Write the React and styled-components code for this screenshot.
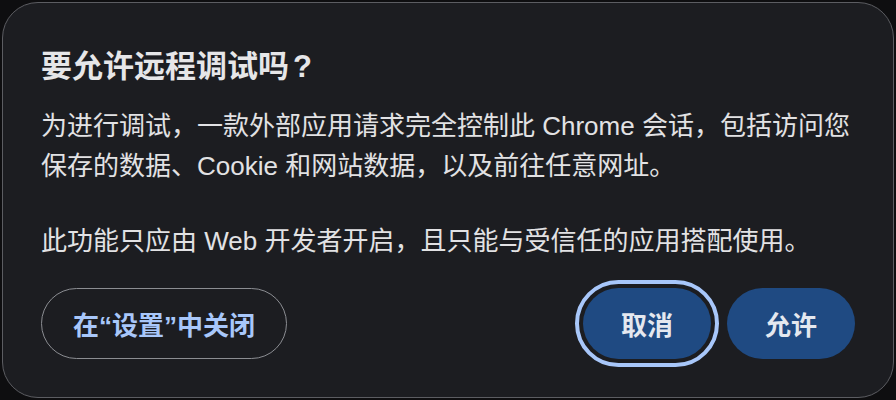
import React from "react";
import styled, { createGlobalStyle } from "styled-components";

const Global = createGlobalStyle`
  html, body { margin: 0; padding: 0; background: #0e0e10; }
  body { width: 896px; height: 400px; overflow: hidden; }
  * { box-sizing: border-box; }
`;

const Page = styled.div`
  width: 896px;
  height: 400px;
  padding: 2px;
  font-family: "Liberation Sans", "Noto Sans CJK SC", sans-serif;
`;

const Dialog = styled.div`
  width: 100%;
  height: 100%;
  background: #1c1d21;
  border: 1.5px solid #5c5d62;
  border-radius: 36px;
  padding: 44px 38px 0 38px;
  display: flex;
  flex-direction: column;
`;

const Title = styled.h1`
  margin: 0;
  font-size: 31px;
  line-height: 40px;
  font-weight: 700;
  color: #e6e6e8;
`;

const Question = styled.span`
  margin-left: 4px;
`;

const Body = styled.div`
  margin-top: 19px;
  display: flex;
  flex-direction: column;
  gap: 35px;
`;

const Para = styled.p`
  margin: 0;
  font-size: 26px;
  line-height: 40px;
  color: #e2e2e4;
`;

const Actions = styled.div`
  margin-top: 27px;
  display: flex;
  align-items: center;
  gap: 16px;
`;

const Spacer = styled.div`
  flex: 1;
`;

const Button = styled.button`
  height: 71px;
  padding: 0 ${(p) => p.$px || 32}px;
  border-radius: 36px;
  font-family: inherit;
  font-size: 26px;
  font-weight: 700;
  cursor: pointer;
  border: ${(p) => (p.$outline ? "1.5px solid #8b8d92" : "none")};
  background: ${(p) => (p.$outline ? "transparent" : "#1f4a82")};
  color: ${(p) => (p.$outline ? "#a8c7fa" : "#e4e8ef")};
  outline: ${(p) => (p.$focused ? "4px solid #a8c7fa" : "none")};
  outline-offset: 4px;
`;

export default function App() {
  return (
    <>
      <Global />
      <Page>
        <Dialog>
          <Title>
            要允许远程调试吗<Question>?</Question>
          </Title>
          <Body>
            <Para>
              为进行调试，一款外部应用请求完全控制此 Chrome 会话，包括访问您
              <br />
              保存的数据、Cookie 和网站数据，以及前往任意网址。
            </Para>
            <Para>此功能只应由 Web 开发者开启，且只能与受信任的应用搭配使用。</Para>
          </Body>
          <Actions>
            <Button $outline $px={31}>在“设置”中关闭</Button>
            <Spacer />
            <Button $focused $px={38}>取消</Button>
            <Button $px={38}>允许</Button>
          </Actions>
        </Dialog>
      </Page>
    </>
  );
}
